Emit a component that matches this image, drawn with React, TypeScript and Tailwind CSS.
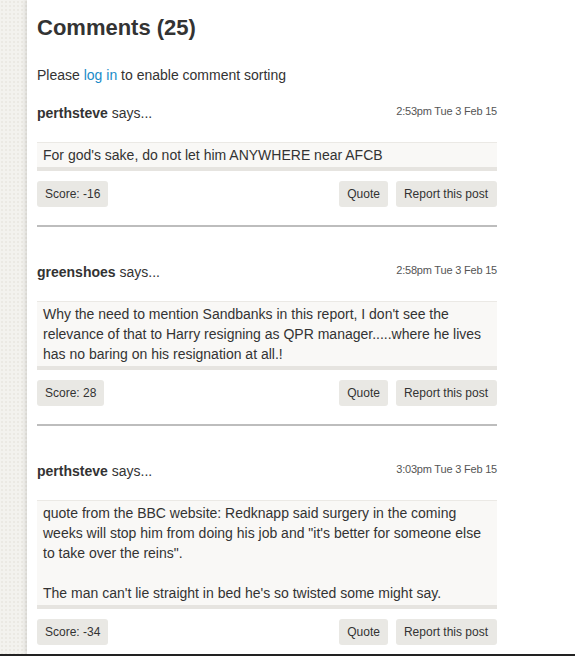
const comments = [
  {
    user: 'perthsteve',
    date: '2:53pm Tue 3 Feb 15',
    body: ["For god's sake, do not let him ANYWHERE near AFCB"],
    score: '-16',
  },
  {
    user: 'greenshoes',
    date: '2:58pm Tue 3 Feb 15',
    body: [
      "Why the need to mention Sandbanks in this report, I don't see the relevance of that to Harry resigning as QPR manager.....where he lives has no baring on his resignation at all.!",
    ],
    score: '28',
  },
  {
    user: 'perthsteve',
    date: '3:03pm Tue 3 Feb 15',
    body: [
      'quote from the BBC website: Redknapp said surgery in the coming weeks will stop him from doing his job and "it\'s better for someone else to take over the reins".',
      "The man can't lie straight in bed he's so twisted some might say.",
    ],
    score: '-34',
  },
];

const Comment = ({ c, last }: { c: (typeof comments)[number]; last: boolean }) => (
  <div className="flex flex-col">
    <div className="flex items-start justify-between h-5">
      <span className="text-[14px] leading-5">
        <b>{c.user}</b> says...
      </span>
      <span className="text-[11px] leading-4 text-[#555] tracking-[-0.2px]">{c.date}</span>
    </div>
    <div className="mt-[19px] bg-[#f9f8f6] border-t border-[#ebe9e5] border-b-4 border-b-[#e6e4e0] px-[6px] pt-[2px] pb-[2px] text-[14px] leading-5">
      {c.body.map((p, i) => (
        <p key={i} className={i > 0 ? 'mt-5' : ''}>
          {p}
        </p>
      ))}
    </div>
    <div className="mt-[10px] flex items-center gap-2 text-[12px]">
      <span className="h-[26px] leading-[26px] px-2 rounded-[3px] bg-[#e9e8e4]">Score: {c.score}</span>
      <span className="ml-auto h-[26px] leading-[26px] px-2 rounded-[3px] bg-[#e9e8e4]">Quote</span>
      <span className="h-[26px] leading-[26px] pl-2 pr-[9px] rounded-[3px] bg-[#e9e8e4]">Report this post</span>
    </div>
    {!last && <div className="mt-[18px] mb-[35px] h-[2px] bg-[#bdbdbd]" />}
  </div>
);

export default function App() {
  return (
    <div className="h-[656px] overflow-hidden flex flex-col font-['Liberation_Sans',Arial,sans-serif] text-[#333]">
      <div className="flex flex-1 min-h-0">
        <div className="w-[27px] shrink-0 bg-[#f3f2ee] bg-[radial-gradient(#ebe9e3_1px,transparent_1px)] bg-[length:4px_4px]" />
        <div className="flex-1 bg-white shadow-[-2px_0_4px_rgba(0,0,0,0.1)] pl-[10px] pt-[15px]">
          <div className="w-[460px]">
            <h2 className="text-[22px] leading-[26px] font-bold">Comments (25)</h2>
            <p className="mt-6 text-[14px] leading-5">
              Please <a className="text-[#1a8bc8]">log in</a> to enable comment sorting
            </p>
            <div className="mt-[18px]">
              {comments.map((c, i) => (
                <Comment key={i} c={c} last={i === comments.length - 1} />
              ))}
            </div>
          </div>
        </div>
      </div>
      <div className="h-[2px] bg-[#222]" />
    </div>
  );
}
